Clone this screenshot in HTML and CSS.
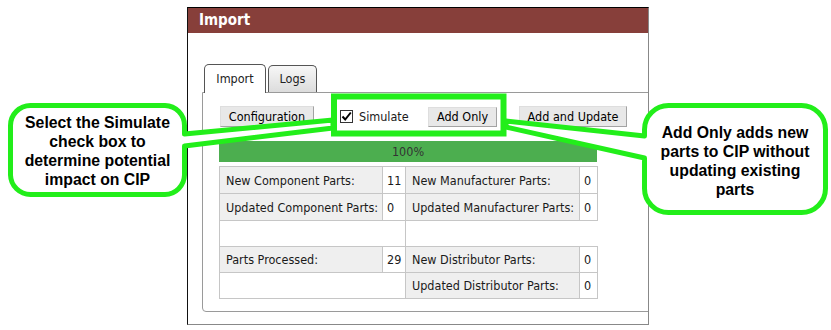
FILE: index.html
```html
<!DOCTYPE html>
<html lang="en">
<head>
    <meta charset="UTF-8">
    <title>Import</title>
    <link rel="stylesheet" href="styles.css">
</head>
<body>
    <div class="stage">
        <!-- Import window -->
        <div class="window">
            <div class="window-title">Import</div>
            <div class="window-body">
                <div class="tabs">
                    <div class="tab active">Import</div>
                    <div class="tab">Logs</div>
                </div>
                <div class="tab-panel">
                    <div class="actions">
                        <button class="btn btn-config">Configuration</button>
                        <label class="check">
                            <span class="check-box">
                                <svg width="11" height="11" viewBox="0 0 11 11"><path d="M1.5 5.5 L4.2 8.5 L9.8 1.5" fill="none" stroke="#000" stroke-width="2"/></svg>
                            </span>
                            Simulate
                        </label>
                        <button class="btn btn-add">Add Only</button>
                        <button class="btn btn-update">Add and Update</button>
                    </div>

                    <div class="progress">100%</div>

                    <table class="stats">
                        <colgroup>
                            <col style="width:163px">
                            <col style="width:23px">
                            <col style="width:174px">
                            <col style="width:18px">
                        </colgroup>
                        <tr class="tall">
                            <td class="label">New Component Parts:</td>
                            <td class="value">11</td>
                            <td class="label">New Manufacturer Parts:</td>
                            <td class="value">0</td>
                        </tr>
                        <tr class="tall">
                            <td class="label">Updated Component Parts:</td>
                            <td class="value">0</td>
                            <td class="label">Updated Manufacturer Parts:</td>
                            <td class="value">0</td>
                        </tr>
                        <tr>
                            <td colspan="2" class="empty"></td>
                            <td colspan="2" class="blank"></td>
                        </tr>
                        <tr>
                            <td class="label">Parts Processed:</td>
                            <td class="value right">29</td>
                            <td class="label">New Distributor Parts:</td>
                            <td class="value">0</td>
                        </tr>
                        <tr>
                            <td colspan="2" class="empty"></td>
                            <td class="label">Updated Distributor Parts:</td>
                            <td class="value">0</td>
                        </tr>
                    </table>
                </div>
            </div>
        </div>

        <!-- Annotation callouts drawn over the screenshot -->
        <svg class="annotations" width="831" height="330" viewBox="0 0 831 330">
            <path d="M30.5 105.5 H165 A20 20 0 0 1 184.5 125.5 V134 L333 120 L333 128 L184.5 146 V175 A20 20 0 0 1 165 194.5 H30.5 A20 20 0 0 1 10.5 175 V125.5 A20 20 0 0 1 30.5 105.5 Z" fill="#fff" stroke="#22ee1a" stroke-width="5" stroke-linejoin="round"/>
            <path d="M668.5 105.5 H801.5 A24 24 0 0 1 825.5 129.5 V188.5 A24 24 0 0 1 801.5 212.5 H668.5 A24 24 0 0 1 644.5 188.5 V158 L506 127 L506 121 L644.5 136 V129.5 A24 24 0 0 1 668.5 105.5 Z" fill="#fff" stroke="#22ee1a" stroke-width="5" stroke-linejoin="round"/>
            <rect x="334" y="96.5" width="169.5" height="37" fill="none" stroke="#22ee1a" stroke-width="6"/>
        </svg>
        <div class="note note-left">Select the Simulate check box to determine potential impact on CIP</div>
        <div class="note note-right">Add Only adds new parts to CIP without updating existing parts</div>
    </div>
</body>
</html>
```

FILE: styles.css
```css
/* Basic Reset */
* {
    margin: 0;
    padding: 0;
    box-sizing: border-box;
}

body {
    background-color: #ffffff;
    font-family: "DejaVu Sans Condensed", "DejaVu Sans", sans-serif;
    font-size: 12.5px;
    color: #1a1a1a;
}

.stage {
    position: relative;
    width: 831px;
    height: 330px;
    overflow: hidden;
    padding: 7px 0 0 187px;
}

/* Window */
.window {
    width: 462px;
    height: 318px;
    border-top: 1px solid #000;
    border-left: 1px solid #111;
    border-right: 1px solid #888;
    border-bottom: 1px solid #888;
    overflow: hidden;
    background-color: #fff;
}

.window-title {
    height: 25px;
    line-height: 25px;
    padding-left: 11px;
    background-color: #873f3a;
    color: #fff;
    font-size: 15px;
    font-weight: bold;
}

.window-body {
    padding: 31px 0 0 14px;
}

/* Tabs */
.tabs {
    display: flex;
    align-items: flex-end;
    gap: 2px;
    height: 28px;
    padding-left: 2px;
}

.tab {
    height: 27px;
    border: 1px solid #555;
    border-bottom: none;
    border-radius: 5px 5px 0 0;
    color: #222;
    text-align: center;
    line-height: 26px;
    width: 49px;
    background: linear-gradient(#f7f7f7, #dcdcdc);
}

.tab.active {
    position: relative;
    z-index: 1;
    width: 62px;
    height: 29px;
    margin-bottom: -1px;
    background: #fff;
    line-height: 28px;
}

.tab-panel {
    width: 470px;
    border: 1px solid #9a9a9a;
    border-radius: 0 0 0 4px;
    padding: 13px 0 12px 16px;
}

/* Action buttons */
.actions {
    display: flex;
    align-items: center;
    height: 21px;
}

.btn {
    height: 21px;
    font-family: inherit;
    font-size: 12.5px;
    color: #000;
    background-color: #e8e8e8;
    border: 1px solid #a3a3a3;
    border-top-color: #dedede;
    border-left-color: #dedede;
}

.btn-config {
    width: 94px;
    margin-left: 1px;
}

.btn-add {
    width: 69px;
    height: 20px;
}

.btn-update {
    width: 108px;
    margin-left: 22px;
}

.check {
    display: flex;
    align-items: center;
    gap: 6px;
    width: 88px;
    margin-left: 26px;
    color: #1a1a1a;
}

.check-box {
    display: flex;
    align-items: center;
    justify-content: center;
    width: 13px;
    height: 13px;
    border: 1px solid #333;
    background-color: #fff;
}

/* Progress */
.progress {
    width: 378px;
    height: 21px;
    margin-top: 14px;
    line-height: 21px;
    background-color: #4cae4f;
    color: #333;
    text-align: center;
}

/* Results table */
.stats {
    width: 378px;
    margin-top: 4px;
    border-collapse: collapse;
    table-layout: fixed;
}

.stats td {
    height: 26px;
    border: 1px solid #c6c6c6;
    white-space: nowrap;
    overflow: hidden;
}

.stats tr.tall td {
    height: 27px;
}

.stats .label {
    background-color: #efefef;
    padding-left: 6px;
}

.stats .value {
    background-color: #fff;
    padding-left: 4px;
}

.stats .value.right {
    text-align: right;
    padding-right: 4px;
}

.stats .blank {
    border: none;
}

/* Callouts */
.annotations {
    position: absolute;
    left: 0;
    top: 0;
    pointer-events: none;
}

.note {
    position: absolute;
    display: flex;
    align-items: center;
    justify-content: center;
    text-align: center;
    font-family: "Liberation Sans", Arial, sans-serif;
    font-weight: bold;
    font-size: 15.8px;
    line-height: 19px;
    color: #000;
}

.note-left {
    left: 13px;
    top: 108px;
    width: 169px;
    height: 84px;
    padding-top: 1px;
}

.note-right {
    left: 650px;
    top: 108px;
    width: 170px;
    height: 102px;
    padding-top: 3px;
}
```
